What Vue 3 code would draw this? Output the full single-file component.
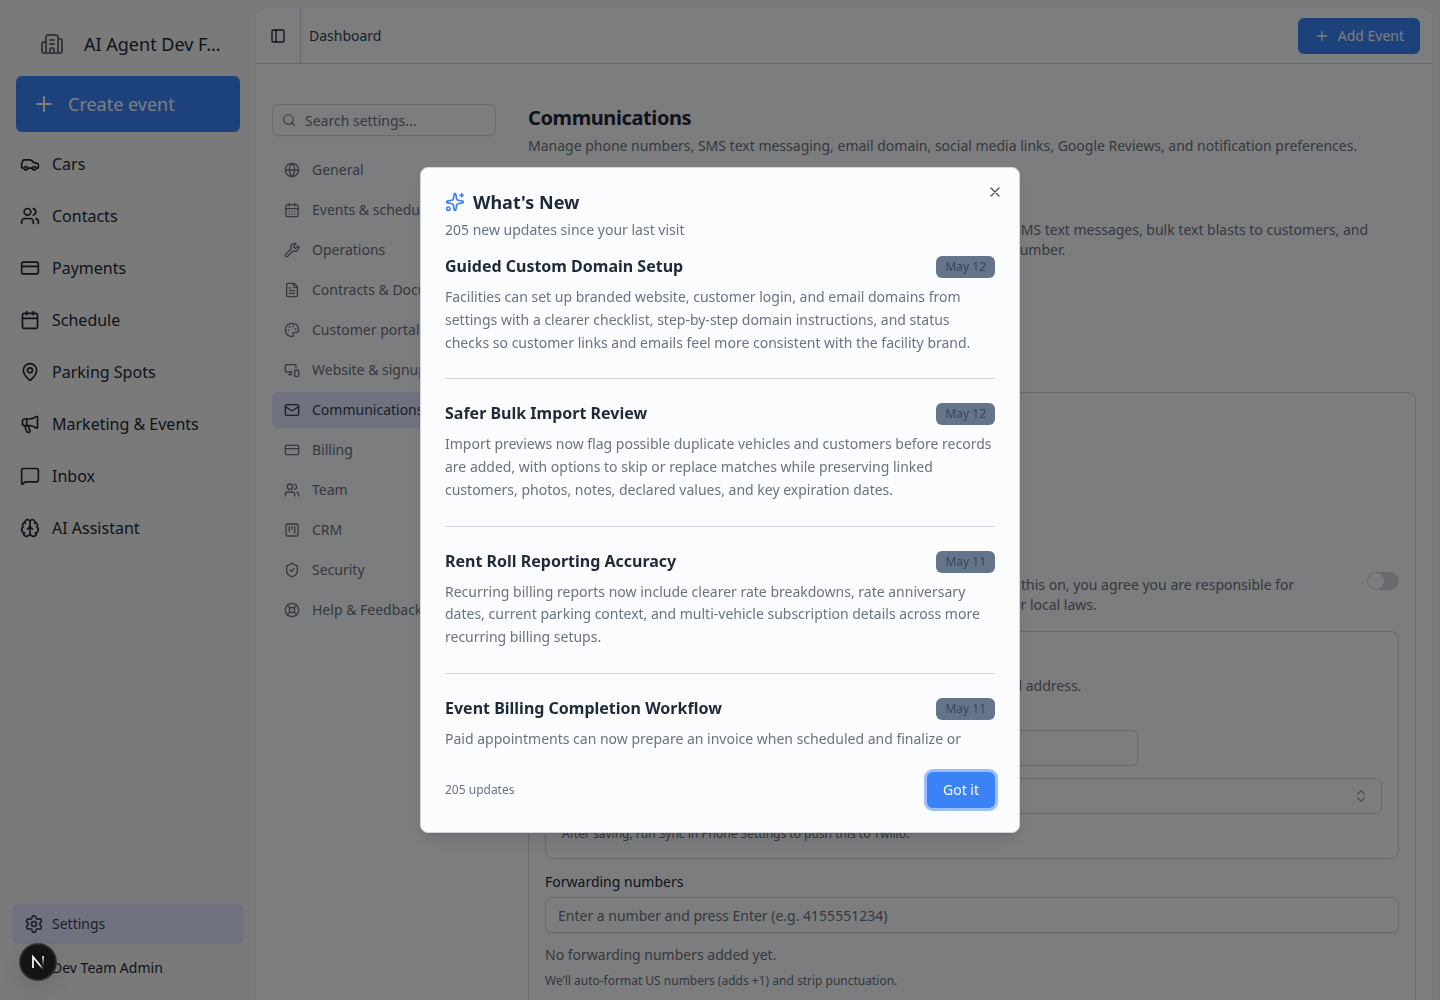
<template>
  <div class="app">
    <aside class="sidebar">
      <div class="sidebar__brand">
        <svg class="icon icon--24 sidebar__logo" viewBox="0 0 24 24" v-html="icons.building"></svg>
        <span>AI Agent Dev F…</span>
      </div>
      <button class="sidebar__create">
        <svg class="icon icon--24" viewBox="0 0 24 24" v-html="icons.plus"></svg>
        <span>Create event</span>
      </button>
      <nav class="sidebar__nav">
        <a v-for="item in mainNav" :key="item.label" class="sidebar__link">
          <svg class="icon icon--20" viewBox="0 0 24 24" v-html="icons[item.icon]"></svg>
          <span>{{ item.label }}</span>
        </a>
      </nav>
      <div class="sidebar__footer">
        <a class="sidebar__settings">
          <svg class="icon icon--20" viewBox="0 0 24 24" v-html="icons.settings"></svg>
          <span>Settings</span>
        </a>
        <div class="sidebar__user">Dev Team Admin</div>
      </div>
    </aside>

    <main class="inset">
      <header class="topbar">
        <button class="topbar__toggle">
          <svg class="icon icon--16" viewBox="0 0 24 24" v-html="icons.panel"></svg>
        </button>
        <span class="topbar__title">Dashboard</span>
        <button class="topbar__add">
          <svg class="icon icon--16" viewBox="0 0 24 24" v-html="icons.plus"></svg>
          <span>Add Event</span>
        </button>
      </header>

      <div class="page">
        <div class="menu">
          <div class="menu__search">
            <svg class="icon icon--14" viewBox="0 0 24 24" v-html="icons.search"></svg>
            <span class="menu__placeholder">Search settings...</span>
          </div>
          <a v-for="item in settingsNav"
             :key="item.label"
             class="menu__link"
             :class="{'menu__link--active': item.label === activeSection}">
            <svg class="icon icon--16" viewBox="0 0 24 24" v-html="icons[item.icon]"></svg>
            <span>{{ item.label }}</span>
          </a>
        </div>

        <section class="content">
          <h1 class="content__title">Communications</h1>
          <p class="content__subtitle">Manage phone numbers, SMS text messaging, email domain, social media links, Google Reviews, and notification preferences.</p>
          <div class="content__intro">
            <div class="content__line">SMS text messages, bulk text blasts to customers, and</div>
            <div>number.</div>
          </div>

          <div class="card">
            <div class="consent">
              <div class="consent__text">
                <div>this on, you agree you are responsible for</div>
                <div class="consent__second">or local laws.</div>
              </div>
              <span class="switch"><span class="switch__thumb"></span></span>
            </div>
            <div class="box">
              <div class="box__text">email address.</div>
              <div class="box__input"></div>
              <div class="box__select">
                <svg class="icon icon--16" viewBox="0 0 24 24" v-html="icons.chevrons"></svg>
              </div>
              <div class="box__hint">After saving, run Sync in Phone Settings to push this to Twilio.</div>
            </div>
            <div class="card__label">Forwarding numbers</div>
            <div class="card__input">Enter a number and press Enter (e.g. 4155551234)</div>
            <div class="card__empty">No forwarding numbers added yet.</div>
            <div class="card__hint">We’ll auto-format US numbers (adds +1) and strip punctuation.</div>
          </div>
        </section>
      </div>
    </main>

    <div v-if="isOpen" class="overlay">
      <div class="dialog" role="dialog">
        <button class="dialog__close" @click="close">
          <svg class="icon icon--16" viewBox="0 0 24 24" v-html="icons.x"></svg>
        </button>
        <div class="dialog__head">
          <svg class="icon icon--20 dialog__sparkles" viewBox="0 0 24 24" v-html="icons.sparkles"></svg>
          <h2 class="dialog__title">What's New</h2>
        </div>
        <p class="dialog__description">205 new updates since your last visit</p>
        <div class="dialog__list">
          <article v-for="update in updates" :key="update.title" class="update">
            <div class="update__head">
              <h3 class="update__title">{{ update.title }}</h3>
              <span class="update__date">{{ update.date }}</span>
            </div>
            <p class="update__text">{{ update.text }}</p>
          </article>
        </div>
        <div class="dialog__footer">
          <span class="dialog__count">205 updates</span>
          <button class="dialog__confirm" @click="close">Got it</button>
        </div>
      </div>
    </div>

    <div class="devtools">
      <svg width="36" height="36" viewBox="0 0 36 36" fill="none">
        <defs>
          <linearGradient id="diagonal" x1="18" y1="18" x2="24" y2="25" gradientUnits="userSpaceOnUse">
            <stop offset="0.3" stop-color="#fff"/>
            <stop offset="1" stop-color="#fff" stop-opacity="0"/>
          </linearGradient>
          <linearGradient id="stem" x1="23" y1="12" x2="23" y2="22" gradientUnits="userSpaceOnUse">
            <stop stop-color="#fff"/>
            <stop offset="1" stop-color="#fff" stop-opacity="0"/>
          </linearGradient>
        </defs>
        <path d="M13 24V12.8L23 25" stroke="url(#diagonal)" stroke-width="1.7"/>
        <path d="M23.1 12v9.5" stroke="url(#stem)" stroke-width="1.6"/>
      </svg>
    </div>
  </div>
</template>

<script setup>
import {ref} from 'vue';

const isOpen = ref(true);
const activeSection = ref('Communications');

const close = () => {
  isOpen.value = false;
};

const mainNav = [
  {label: 'Cars', icon: 'car'},
  {label: 'Contacts', icon: 'users'},
  {label: 'Payments', icon: 'card'},
  {label: 'Schedule', icon: 'calendar'},
  {label: 'Parking Spots', icon: 'pin'},
  {label: 'Marketing & Events', icon: 'megaphone'},
  {label: 'Inbox', icon: 'message'},
  {label: 'AI Assistant', icon: 'brain'},
];

const settingsNav = [
  {label: 'General', icon: 'globe'},
  {label: 'Events & scheduling', icon: 'calendarDays'},
  {label: 'Operations', icon: 'wrench'},
  {label: 'Contracts & Documents', icon: 'file'},
  {label: 'Customer portal', icon: 'palette'},
  {label: 'Website & signup', icon: 'devices'},
  {label: 'Communications', icon: 'mail'},
  {label: 'Billing', icon: 'card'},
  {label: 'Team', icon: 'users'},
  {label: 'CRM', icon: 'kanban'},
  {label: 'Security', icon: 'shield'},
  {label: 'Help & Feedback', icon: 'lifebuoy'},
];

const updates = [
  {
    title: 'Guided Custom Domain Setup',
    date: 'May 12',
    text: 'Facilities can set up branded website, customer login, and email domains from settings with a clearer checklist, step-by-step domain instructions, and status checks so customer links and emails feel more consistent with the facility brand.',
  },
  {
    title: 'Safer Bulk Import Review',
    date: 'May 12',
    text: 'Import previews now flag possible duplicate vehicles and customers before records are added, with options to skip or replace matches while preserving linked customers, photos, notes, declared values, and key expiration dates.',
  },
  {
    title: 'Rent Roll Reporting Accuracy',
    date: 'May 11',
    text: 'Recurring billing reports now include clearer rate breakdowns, rate anniversary dates, current parking context, and multi-vehicle subscription details across more recurring billing setups.',
  },
  {
    title: 'Event Billing Completion Workflow',
    date: 'May 11',
    text: 'Paid appointments can now prepare an invoice when scheduled and finalize or',
  },
];

const icons = {
  building: '<path d="M10 12h4M10 8h4M14 21v-3a2 2 0 0 0-4 0v3"/><path d="M6 10H4a2 2 0 0 0-2 2v7a2 2 0 0 0 2 2h16a2 2 0 0 0 2-2V9a2 2 0 0 0-2-2h-2"/><path d="M6 21V5a2 2 0 0 1 2-2h8a2 2 0 0 1 2 2v16"/>',
  plus: '<path d="M5 12h14M12 5v14"/>',
  x: '<path d="M18 6 6 18M6 6l12 12"/>',
  panel: '<rect width="18" height="18" x="3" y="3" rx="2"/><path d="M9 3v18"/>',
  search: '<circle cx="11" cy="11" r="8"/><path d="m21 21-4.34-4.34"/>',
  chevrons: '<path d="m7 15 5 5 5-5M7 9l5-5 5 5"/>',
  car: '<path d="M19 17h2c.6 0 1-.4 1-1v-3c0-.9-.7-1.7-1.5-1.9C18.7 10.6 16 10 16 10s-1.3-1.4-2.2-2.3c-.5-.4-1.1-.7-1.8-.7H5c-.6 0-1.1.4-1.4.9l-1.4 2.9A3.7 3.7 0 0 0 2 12v4c0 .6.4 1 1 1h2"/><circle cx="7" cy="17" r="2"/><path d="M9 17h6"/><circle cx="17" cy="17" r="2"/>',
  users: '<path d="M16 21v-2a4 4 0 0 0-4-4H6a4 4 0 0 0-4 4v2M16 3.128a4 4 0 0 1 0 7.744M22 21v-2a4 4 0 0 0-3-3.87"/><circle cx="9" cy="7" r="4"/>',
  card: '<rect width="20" height="14" x="2" y="5" rx="2"/><path d="M2 10h20"/>',
  calendar: '<path d="M8 2v4M16 2v4"/><rect width="18" height="18" x="3" y="4" rx="2"/><path d="M3 10h18"/>',
  calendarDays: '<path d="M8 2v4M16 2v4"/><rect width="18" height="18" x="3" y="4" rx="2"/><path d="M3 10h18M8 14h.01M12 14h.01M16 14h.01M8 18h.01M12 18h.01M16 18h.01"/>',
  pin: '<path d="M20 10c0 4.993-5.539 10.193-7.399 11.799a1 1 0 0 1-1.202 0C9.539 20.193 4 14.993 4 10a8 8 0 0 1 16 0"/><circle cx="12" cy="10" r="3"/>',
  megaphone: '<path d="M11 6a13 13 0 0 0 8.4-2.8A1 1 0 0 1 21 4v12a1 1 0 0 1-1.6.8A13 13 0 0 0 11 14H5a2 2 0 0 1-2-2V8a2 2 0 0 1 2-2z"/><path d="M6 14a12 12 0 0 0 2.4 7.2 2 2 0 0 0 3.2-2.4A8 8 0 0 1 10 14M8 6v8"/>',
  message: '<path d="M22 17a2 2 0 0 1-2 2H6.828a2 2 0 0 0-1.414.586l-2.202 2.202A.71.71 0 0 1 2 21.286V5a2 2 0 0 1 2-2h16a2 2 0 0 1 2 2z"/>',
  brain: '<path d="M12 18V5M15 13a4.17 4.17 0 0 1-3-4 4.17 4.17 0 0 1-3 4M17.598 6.5A3 3 0 1 0 12 5a3 3 0 1 0-5.598 1.5M17.997 5.125a4 4 0 0 1 2.526 5.77M18 18a4 4 0 0 0 2-7.464M19.967 17.483A4 4 0 1 1 12 18a4 4 0 1 1-7.967-.517M6 18a4 4 0 0 1-2-7.464M6.003 5.125a4 4 0 0 0-2.526 5.77"/>',
  settings: '<path d="M9.671 4.136a2.34 2.34 0 0 1 4.659 0 2.34 2.34 0 0 0 3.319 1.915 2.34 2.34 0 0 1 2.33 4.033 2.34 2.34 0 0 0 0 3.831 2.34 2.34 0 0 1-2.33 4.033 2.34 2.34 0 0 0-3.319 1.915 2.34 2.34 0 0 1-4.659 0 2.34 2.34 0 0 0-3.32-1.915 2.34 2.34 0 0 1-2.33-4.033 2.34 2.34 0 0 0 0-3.831A2.34 2.34 0 0 1 6.35 6.051a2.34 2.34 0 0 0 3.319-1.915"/><circle cx="12" cy="12" r="3"/>',
  globe: '<circle cx="12" cy="12" r="10"/><path d="M12 2a14.5 14.5 0 0 0 0 20 14.5 14.5 0 0 0 0-20M2 12h20"/>',
  wrench: '<path d="M14.7 6.3a1 1 0 0 0 0 1.4l1.6 1.6a1 1 0 0 0 1.4 0l3.106-3.105c.32-.322.863-.22.983.218a6 6 0 0 1-8.259 7.057l-7.91 7.91a1 1 0 0 1-2.999-3l7.91-7.91a6 6 0 0 1 7.057-8.259c.438.12.54.662.219.984z"/>',
  file: '<path d="M15 2H6a2 2 0 0 0-2 2v16a2 2 0 0 0 2 2h12a2 2 0 0 0 2-2V7Z"/><path d="M14 2v4a2 2 0 0 0 2 2h4M10 9H8M16 13H8M16 17H8"/>',
  palette: '<path d="M12 22a1 1 0 0 1 0-20 10 9 0 0 1 10 9 5 5 0 0 1-5 5h-2.25a1.75 1.75 0 0 0-1.4 2.8l.3.4a1.75 1.75 0 0 1-1.4 2.8z"/><circle cx="13.5" cy="6.5" r=".5"/><circle cx="17.5" cy="10.5" r=".5"/><circle cx="6.5" cy="12.5" r=".5"/><circle cx="8.5" cy="7.5" r=".5"/>',
  devices: '<path d="M18 8V6a2 2 0 0 0-2-2H4a2 2 0 0 0-2 2v7a2 2 0 0 0 2 2h8M10 19v-3.96 3.15M7 19h5"/><rect width="6" height="10" x="16" y="12" rx="2"/>',
  mail: '<rect width="20" height="16" x="2" y="4" rx="2"/><path d="m22 7-8.991 5.727a2 2 0 0 1-2.009 0L2 7"/>',
  kanban: '<rect width="18" height="18" x="3" y="3" rx="2"/><path d="M8 7v7M12 7v4M16 7v9"/>',
  shield: '<path d="M20 13c0 5-3.5 7.5-7.66 8.95a1 1 0 0 1-.67-.01C7.5 20.5 4 18 4 13V6a1 1 0 0 1 1-1c2 0 4.5-1.2 6.24-2.72a1.17 1.17 0 0 1 1.52 0C14.51 3.81 17 5 19 5a1 1 0 0 1 1 1z"/><path d="m9 12 2 2 4-4"/>',
  lifebuoy: '<circle cx="12" cy="12" r="10"/><path d="m4.93 4.93 4.24 4.24M14.83 9.17l4.24-4.24M14.83 14.83l4.24 4.24M9.17 14.83l-4.24 4.24"/><circle cx="12" cy="12" r="4"/>',
  sparkles: '<path d="M11.017 2.814a1 1 0 0 1 1.966 0l1.051 5.558a2 2 0 0 0 1.594 1.594l5.558 1.051a1 1 0 0 1 0 1.966l-5.558 1.051a2 2 0 0 0-1.594 1.594l-1.051 5.558a1 1 0 0 1-1.966 0l-1.051-5.558a2 2 0 0 0-1.594-1.594l-5.558-1.051a1 1 0 0 1 0-1.966l5.558-1.051a2 2 0 0 0 1.594-1.594z"/><path d="M20 2v4M22 4h-4"/><circle cx="4" cy="20" r="2"/>',
};
</script>

<style scoped>
.app {
  display: flex;
  width: 1440px;
  height: 1000px;
  overflow: hidden;
  box-sizing: border-box;
  background: #f4f4f4;
  color: #1f2937;
  font-family: "Noto Sans", "Open Sans", sans-serif;
  font-size: 14px;
  line-height: 20px;
}

.app * {
  box-sizing: border-box;
}

h1, h2, h3, p {
  margin: 0;
}

button {
  padding: 0;
  border: 0;
  background: none;
  color: inherit;
  font: inherit;
}

.icon {
  flex: none;
  fill: none;
  stroke: currentColor;
  stroke-width: 2;
  stroke-linecap: round;
  stroke-linejoin: round;
}

.icon--14 {
  width: 14px;
  height: 14px;
}

.icon--16 {
  width: 16px;
  height: 16px;
}

.icon--20 {
  width: 20px;
  height: 20px;
}

.icon--24 {
  width: 24px;
  height: 24px;
}

/* Main sidebar */
.sidebar {
  display: flex;
  flex: none;
  flex-direction: column;
  width: 256px;
  padding: 12px;
}

.sidebar__brand {
  display: flex;
  align-items: center;
  gap: 20px;
  height: 64px;
  padding-left: 28px;
  font-size: 18px;
}

.sidebar__logo {
  color: #6b7280;
}

.sidebar__create {
  display: flex;
  flex: none;
  align-items: center;
  gap: 12px;
  height: 56px;
  margin: 0 4px;
  padding-left: 16px;
  border-radius: 6px;
  background: #3b82f6;
  color: #f8fafc;
  font-size: 18px;
}

.sidebar__nav {
  display: flex;
  flex-direction: column;
  gap: 4px;
  margin-top: 8px;
}

.sidebar__link {
  display: flex;
  align-items: center;
  gap: 12px;
  height: 48px;
  padding-left: 8px;
  font-size: 16px;
}

.sidebar__footer {
  margin-top: auto;
}

.sidebar__settings {
  display: flex;
  align-items: center;
  gap: 8px;
  height: 40px;
  padding-left: 12px;
  border-radius: 6px;
  background: #e0e4ff;
  color: #374151;
}

.sidebar__user {
  height: 44px;
  padding-left: 40px;
  line-height: 48px;
}

/* Page */
.inset {
  flex: 1;
  min-width: 0;
  height: 1010px;
  margin: 8px 8px 0 0;
  border-radius: 12px 12px 0 0;
  background: #f9fbfd;
  box-shadow: 0 1px 3px rgba(0, 0, 0, .05);
}

.topbar {
  display: flex;
  align-items: center;
  height: 56px;
  padding-right: 12px;
  border-bottom: 1px solid #d1d5db;
}

.topbar__toggle {
  display: flex;
  align-items: center;
  justify-content: center;
  width: 45px;
  height: 55px;
  border-right: 1px solid #d1d5db;
}

.topbar__title {
  margin-left: 8px;
  color: #374151;
}

.topbar__add {
  display: flex;
  align-items: center;
  gap: 8px;
  height: 36px;
  margin-left: auto;
  padding: 0 16px;
  border-radius: 6px;
  background: #3b82f6;
  color: #f8fafc;
}

.page {
  display: flex;
  gap: 32px;
  padding: 40px 16px 0;
}

.menu {
  display: flex;
  flex: none;
  flex-direction: column;
  gap: 4px;
  width: 224px;
}

.menu__search {
  display: flex;
  align-items: center;
  gap: 9px;
  height: 32px;
  margin-bottom: 12px;
  padding-left: 9px;
  border: 1px solid #d1d5db;
  border-radius: 6px;
  color: #6b7280;
  box-shadow: 0 1px 2px rgba(0, 0, 0, .06);
}

.menu__placeholder {
  padding-top: 2px;
}

.menu__link {
  display: flex;
  align-items: center;
  gap: 12px;
  height: 36px;
  padding-left: 12px;
  border-radius: 6px;
  color: #6b7280;
  white-space: nowrap;
}

.menu__link--active {
  background: #e0e4ff;
  color: #374151;
}

.content {
  flex: 1;
  min-width: 0;
  color: #6b7280;
}

.content__title {
  color: #1f2937;
  font-size: 20px;
  font-weight: 700;
  line-height: 28px;
  letter-spacing: -0.4px;
}

.content__subtitle {
  margin-top: 4px;
}

.content__intro {
  height: 172px;
  margin-top: 64px;
  padding-left: 483px;
  white-space: nowrap;
}

.content__line {
  padding-left: 2px;
}

.card {
  height: 700px;
  padding: 0 16px;
  border: 1px solid #d1d5db;
  border-radius: 8px;
}

.consent {
  display: flex;
  justify-content: space-between;
  padding-top: 179px;
}

.consent__text {
  margin-top: 3px;
  padding-left: 476px;
  white-space: nowrap;
}

.consent__second {
  margin-left: -9px;
}

.switch {
  width: 32px;
  height: 18px;
  padding: 1px;
  border-radius: 9px;
  background: #d1d5db;
}

.switch__thumb {
  display: block;
  width: 16px;
  height: 16px;
  border-radius: 50%;
  background: #f9fbfd;
}

.box {
  height: 228px;
  margin-top: 16px;
  padding: 44px 16px 0;
  border: 1px solid #d1d5db;
  border-radius: 8px;
}

.box__text {
  padding-left: 424px;
}

.box__input {
  width: 576px;
  height: 36px;
  margin-top: 34px;
  border: 1px solid #d1d5db;
  border-radius: 6px;
}

.box__select {
  display: flex;
  align-items: center;
  justify-content: flex-end;
  height: 36px;
  margin-top: 12px;
  padding-right: 12px;
  border: 1px solid #d1d5db;
  border-radius: 6px;
  color: #9ca3af;
}

.box__hint {
  margin-top: 12px;
  font-size: 12px;
  line-height: 16px;
}

.card__label {
  margin-top: 13px;
  color: #1f2937;
}

.card__input {
  height: 36px;
  margin-top: 5px;
  padding-left: 12px;
  border: 1px solid #d1d5db;
  border-radius: 6px;
  line-height: 36px;
  box-shadow: 0 1px 2px rgba(0, 0, 0, .06);
}

.card__empty {
  margin-top: 12px;
}

.card__hint {
  margin-top: 8px;
  font-size: 12px;
  line-height: 16px;
}

/* Dialog */
.overlay {
  position: fixed;
  inset: 0;
  display: flex;
  align-items: center;
  justify-content: center;
  background: rgba(0, 0, 0, .5);
}

.dialog {
  position: relative;
  width: 600px;
  height: 666px;
  padding: 24px;
  border: 1px solid #d1d5db;
  border-radius: 8px;
  background: #fafcfe;
  box-shadow: 0 10px 15px -3px rgba(0, 0, 0, .1), 0 4px 6px -4px rgba(0, 0, 0, .1);
}

.dialog__close {
  position: absolute;
  top: 16px;
  right: 16px;
  display: flex;
  color: #4f5663;
}

.dialog__head {
  display: flex;
  align-items: center;
  gap: 8px;
  height: 20px;
}

.dialog__sparkles {
  color: #3b82f6;
}

.dialog__title {
  font-size: 18px;
  font-weight: 700;
  line-height: 20px;
}

.dialog__description {
  margin-top: 8px;
  color: #6b7280;
}

.dialog__list {
  height: 500px;
  margin-top: 16px;
  overflow: hidden;
}

.update + .update {
  margin-top: 24px;
  padding-top: 24px;
  border-top: 1px solid #d1d5db;
}

.update__head {
  display: flex;
  align-items: flex-start;
  justify-content: space-between;
  height: 22px;
}

.update__title {
  font-size: 16px;
  font-weight: 700;
  line-height: 20px;
}

.update__date {
  height: 22px;
  padding: 0 9px;
  border-radius: 6px;
  background: #64748b;
  color: #3b465c;
  font-size: 12px;
  line-height: 22px;
}

.update__text {
  margin-top: 8px;
  color: #6b7280;
  line-height: 22.75px;
}

.dialog__footer {
  display: flex;
  align-items: center;
  justify-content: space-between;
  margin-top: 16px;
}

.dialog__count {
  color: #6b7280;
  font-size: 12px;
}

.dialog__confirm {
  height: 36px;
  padding: 0 16px;
  border-radius: 6px;
  background: #3b82f6;
  color: #f8fafc;
  box-shadow: 0 0 0 3px rgba(59, 130, 246, .5);
}

/* Dev badge floats above the overlay */
.devtools {
  position: fixed;
  bottom: 20px;
  left: 20px;
  width: 36px;
  height: 36px;
  border-radius: 50%;
  background: #141414;
  box-shadow: 0 0 0 1px #3a3a3a, inset 0 0 0 1px #2c2c2c, 0 8px 20px rgba(0, 0, 0, .12);
}
</style>

<style>
body {
  margin: 0;
  overflow: hidden;
}
</style>
